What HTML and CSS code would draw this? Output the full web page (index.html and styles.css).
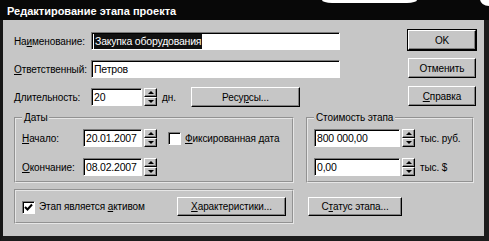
FILE: index.html
```html
<!doctype html>
<html>
  <head>
    <meta charset=utf-8>
    <title>Редактирование этапа проекта</title>
    <link rel="stylesheet" href="styles.css">
  </head>
  <body>
  <div class="dlg">
    <div class="caption">Редактирование этапа проекта</div>
    <span class="notch notch-mid"></span>
    <span class="notch notch-corner"></span>

    <div class="client">
      <div class="top">
        <div class="fields">
          <label class="lbl">На<u>и</u>менование:</label>
          <div class="edit wide"><span class="sel">Закупка оборудования</span></div>
          <label class="lbl"><u>О</u>тветственный:</label>
          <div class="edit wide">Петров</div>
          <label class="lbl"><u>Д</u>лительность:</label>
          <div class="line">
            <div class="edit dur">20</div>
            <div class="spin"><span class="arr up"></span><span class="arr dn"></span></div>
            <span class="unit">дн.</span>
            <button class="btn res">Ресу<u>р</u>сы...</button>
          </div>
        </div>
        <div class="cmds">
          <button class="btn def">OK</button>
          <button class="btn">Отменить</button>
          <button class="btn"><u>С</u>правка</button>
        </div>
      </div>

      <div class="groups">
        <fieldset class="grp dates">
          <legend>Даты</legend>
          <div class="rows">
            <label class="lbl"><u>Н</u>ачало:</label>
            <div class="line">
              <div class="edit date">20.01.2007</div>
              <div class="spin"><span class="arr up"></span><span class="arr dn"></span></div>
              <span class="chk"></span>
              <span class="chk-lbl"><u>Ф</u>иксированная дата</span>
            </div>
            <label class="lbl"><u>О</u>кончание:</label>
            <div class="line">
              <div class="edit date">08.02.2007</div>
              <div class="spin"><span class="arr up"></span><span class="arr dn"></span></div>
            </div>
          </div>
        </fieldset>
        <fieldset class="grp cost">
          <legend>Стоимость этапа</legend>
          <div class="rows">
            <div class="line">
              <div class="edit money">800 000,00</div>
              <div class="spin"><span class="arr up"></span><span class="arr dn"></span></div>
              <span class="unit">тыс. руб.</span>
            </div>
            <div class="line">
              <div class="edit money">0,00</div>
              <div class="spin"><span class="arr up"></span><span class="arr dn"></span></div>
              <span class="unit">тыс. $</span>
            </div>
          </div>
        </fieldset>
      </div>

      <div class="bottom">
        <div class="grp act">
          <span class="chk on">
            <svg width="9" height="9" viewBox="0 0 9 9"><path d="M1 4 L3.5 6.5 L8 1.5" fill="none" stroke="#000" stroke-width="2"/></svg>
          </span>
          <span class="chk-lbl">Этап является <u>а</u>ктивом</span>
          <button class="btn chars"><u>Х</u>арактеристики...</button>
        </div>
        <button class="btn status">С<u>т</u>атус этапа...</button>
      </div>
    </div>
  </div>
  </body>
</html>
```

FILE: styles.css
```css
*{
  box-sizing:border-box;
}
body{
  margin:0;
  background:#fff;
  font-family:"Liberation Sans", Arial, sans-serif;
  font-size:10px;
  letter-spacing:-0.1px;
  color:#000;
}
u{
  text-decoration:underline;
  text-underline-offset:1px;
}

.dlg{
  position:relative;
  width:489px;
  height:241px;
  background:#c6c6c6;
  border-left:3px solid #161616;
  border-right:5px solid #1c1c1c;
  border-bottom:5px solid #1c1c1c;
  display:flex;
  flex-direction:column;
}
.caption{
  height:20px;
  background:#080808;
  color:#fff;
  font-weight:bold;
  font-size:11px;
  letter-spacing:0;
  line-height:17px;
  padding:3px 0 0 7px;
  margin-left:-3px;
  margin-right:-5px;
}
/* scan artefacts: white bites out of the title bar */
.notch{
  position:absolute;
  background:#fff;
}
.notch-mid{
  top:0;
  left:319px;
  width:95px;
  height:3px;
  border-radius:0 0 10px 10px / 0 0 3px 3px;
}
.notch-corner{
  top:-1px;
  right:-5px;
  width:9px;
  height:7px;
  border-bottom-left-radius:9px 7px;
}

.client{
  flex:1;
  padding:10px 8px 0 11px;
}

.top{
  display:flex;
}
.fields{
  display:grid;
  grid-template-columns:77px 249px;
  grid-auto-rows:18px;
  row-gap:10px;
  margin-top:2px;
  align-items:center;
}
.lbl{
  white-space:nowrap;
}
.line{
  display:flex;
  align-items:center;
  height:18px;
}

.edit{
  height:18px;
  background:#fff;
  border:1px solid;
  border-color:#7a7a7a #fff #fff #7a7a7a;
  box-shadow:inset 1px 1px #000;
  padding:0 0 0 2px;
  font-size:10.5px;
  letter-spacing:-0.2px;
  line-height:16px;
  white-space:nowrap;
  overflow:hidden;
}
.wide{ width:249px; }
.dur{ width:51px; }
.date{ width:59px; }
.money{ width:86px; }
.sel{
  background:#111;
  color:#fff;
  padding:1px 1px 2px 1px;
}

.spin{
  width:13px;
  height:18px;
  margin-left:2px;
  display:flex;
  flex-direction:column;
  flex:none;
}
.arr{
  flex:1;
  background:#c6c6c6;
  border:1px solid;
  border-color:#fff #000 #000 #fff;
  box-shadow:inset -1px -1px #808080;
  display:flex;
  align-items:center;
  justify-content:center;
}
.arr::after{
  content:"";
  width:0;
  height:0;
  border-left:3px solid transparent;
  border-right:3px solid transparent;
}
.up::after{ border-bottom:3px solid #000; }
.dn::after{ border-top:3px solid #000; }

.unit{
  margin-left:5px;
  white-space:nowrap;
}

.btn{
  height:20px;
  font:inherit;
  letter-spacing:inherit;
  color:#000;
  background:#c6c6c6;
  border:1px solid;
  border-color:#fff #000 #000 #fff;
  box-shadow:inset -1px -1px #808080;
  padding:0;
  white-space:nowrap;
}
.res{
  width:109px;
  margin-left:auto;
  margin-right:40px;
}
.cmds{
  margin-left:auto;
  width:68px;
  display:flex;
  flex-direction:column;
  gap:8px;
}
.def{
  box-shadow:0 0 0 1px #000, inset -1px -1px #808080;
}

.groups{
  display:flex;
  gap:12px;
  margin-top:5px;
}
.grp{
  margin:0;
  border:2px groove #e6e6e6;
}
fieldset.grp{
  height:72px;
  padding:5px 5px 0 6px;
}
legend{
  padding:0 2px;
  margin-left:0;
  line-height:13px;
}
.dates{ width:280px; }
.cost{ width:168px; }

.rows{
  display:grid;
  grid-auto-rows:18px;
  row-gap:11px;
  align-items:center;
}
.dates .rows{
  grid-template-columns:61px 1fr;
}
.cost .rows{
  grid-template-columns:1fr;
}

.chk{
  width:13px;
  height:13px;
  background:#fff;
  border:1px solid;
  border-color:#7a7a7a #fff #fff #7a7a7a;
  box-shadow:inset 1px 1px #000;
  margin-left:11px;
  display:flex;
  align-items:center;
  justify-content:center;
  flex:none;
}
.chk-lbl{
  margin-left:4px;
  white-space:nowrap;
}

.bottom{
  display:flex;
  align-items:center;
  gap:14px;
  margin-top:6px;
}
.act{
  width:280px;
  height:35px;
  display:flex;
  align-items:center;
  padding-left:6px;
}
.act .chk{
  margin-left:0;
  margin-top:2px;
}
.chars{
  width:109px;
  height:19px;
  margin-left:auto;
  margin-right:6px;
}
.status{
  width:94px;
  height:19px;
}
```
